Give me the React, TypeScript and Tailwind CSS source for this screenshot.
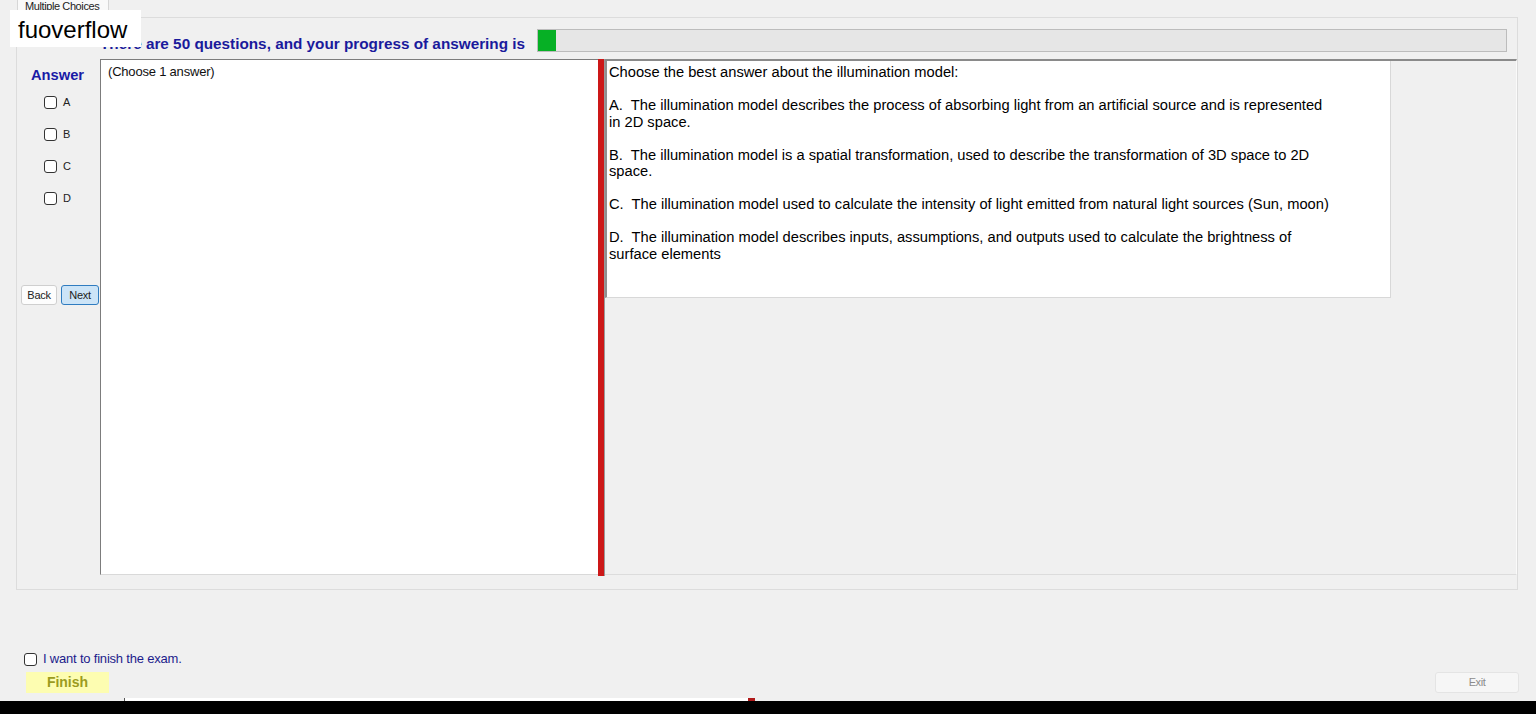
import React from "react";

const Box = () => (
  <div className="w-[13px] h-[13px] border border-[#333333] rounded-[3px] bg-white shrink-0" />
);

const lines: string[] = [
  "Choose the best answer about the illumination model:",
  "",
  "A.  The illumination model describes the process of absorbing light from an artificial source and is represented",
  "in 2D space.",
  "",
  "B.  The illumination model is a spatial transformation, used to describe the transformation of 3D space to 2D",
  "space.",
  "",
  "C.  The illumination model used to calculate the intensity of light emitted from natural light sources (Sun, moon)",
  "",
  "D.  The illumination model describes inputs, assumptions, and outputs used to calculate the brightness of",
  "surface elements",
];

export default function App() {
  return (
    <div className="relative w-[1536px] h-[714px] overflow-hidden bg-[#f0f0f0] flex flex-col font-['Liberation_Sans',Arial,sans-serif] text-black">
      {/* tab strip */}
      <div className="h-[17px] pl-[17px] flex shrink-0">
        <div className="w-[92px] h-[17px] bg-[#f9f9f9] border-x border-[#d6d6d6] text-[11px] leading-[13px] tracking-[-0.4px] text-[#222222] pl-[7px]">
          Multiple Choices
        </div>
      </div>

      {/* tab panel */}
      <div className="ml-[16px] w-[1502px] h-[573px] shrink-0 border border-[#dcdcdc] flex flex-col">
        {/* header */}
        <div className="h-[41px] flex pt-[11px] shrink-0">
          <div className="w-[520px] pl-[83px] pt-[7px] text-[15.3px] leading-[16px] font-bold text-[#1a1a9c] whitespace-nowrap">
            There are 50 questions, and your progress of answering is
          </div>
          <div className="w-[970px] h-[23px] bg-[#e6e6e6] border border-[#bcbcbc] flex">
            <div className="w-[18px] h-full bg-[#06b025]" />
          </div>
        </div>

        {/* content */}
        <div className="h-[516px] flex shrink-0">
          {/* left column */}
          <div className="w-[83px] flex flex-col shrink-0">
            <div className="pl-[14px] pt-[8px] text-[14.7px] leading-[16px] font-bold text-[#1a1aa6]">Answer</div>
            <div className="mt-[13px] flex flex-col">
              {["A", "B", "C", "D"].map((l) => (
                <div key={l} className="h-[32px] flex items-start pl-[27px]">
                  <Box />
                  <span className="ml-[6px] text-[11px] leading-[13px] text-[#222222]">{l}</span>
                </div>
              ))}
            </div>
            <div className="mt-[61px] pl-[4px] flex gap-[4px]">
              <div className="w-[36px] h-[20px] bg-[#fdfdfd] border border-[#cfcfcf] rounded-[3px] text-[11px] leading-[18px] text-center tracking-[-0.3px] text-[#222222]">
                Back
              </div>
              <div className="w-[38px] h-[20px] bg-[#cce4f7] border border-[#2f7cc0] rounded-[3px] text-[11px] leading-[18px] text-center tracking-[-0.3px] text-[#222222]">
                Next
              </div>
            </div>
          </div>

          {/* answer textbox */}
          <div className="w-[498px] h-[516px] bg-white border-t border-l border-[#7c7c7c] border-b-[#d9d9d9] border-b shrink-0 pl-[7px] pt-[5px] text-[13px] leading-[14px] tracking-[-0.2px] text-[#111111]">
            (Choose 1 answer)
          </div>

          {/* splitter */}
          <div className="w-[7px] h-[517px] bg-[#cc1818] border-r border-[#9a9a9a] shrink-0" />

          {/* right area */}
          <div className="flex-1 h-[516px] border-t-2 border-t-[#8a8a8a] border-r border-r-[#fafafa] border-b border-b-[#dcdcdc]">
            <div className="w-[786px] h-[237px] bg-white border-l-2 border-l-[#8f8f8f] border-r border-b border-r-[#d8d8d8] border-b-[#d8d8d8] pl-[2px] pt-[3px] text-[14.7px] text-black">
              {lines.map((t, i) => (
                <div key={i} className="h-[16.55px] leading-[16.55px] whitespace-pre">
                  {t}
                </div>
              ))}
            </div>
          </div>
        </div>
      </div>

      {/* finish checkbox */}
      <div className="mt-[62px] h-[14px] pl-[24px] flex items-center shrink-0">
        <Box />
        <span className="ml-[6px] text-[13px] leading-[14px] tracking-[-0.2px] text-[#1c1c8c]">I want to finish the exam.</span>
      </div>

      {/* buttons */}
      <div className="mt-[6px] h-[21px] flex justify-between pl-[26px] pr-[17px] shrink-0">
        <div className="w-[83px] h-[21px] bg-[#fdfdb1] text-[14px] leading-[21px] font-bold text-[#9b9b1e] text-center">
          Finish
        </div>
        <div className="w-[84px] h-[21px] bg-[#f6f6f6] border border-[#e4e4e4] rounded-[3px] text-[11px] leading-[19px] tracking-[-0.4px] text-[#8c8c8c] text-center">
          Exit
        </div>
      </div>

      <div className="flex-1" />

      {/* bottom strip */}
      <div className="h-[3px] flex shrink-0">
        <div className="ml-[124px] w-[1px] h-[3px] bg-[#555555]" />
        <div className="w-[623px] h-[3px] bg-white" />
        <div className="w-[7px] h-[3px] bg-[#b01a1a]" />
      </div>
      <div className="h-[13px] bg-black shrink-0" />

      {/* watermark */}
      <div className="absolute left-[10px] top-[10px] w-[131px] h-[37px] bg-white pl-[8px] pt-[8px] text-[24px] leading-[24px] text-black">
        fuoverflow
      </div>
    </div>
  );
}
